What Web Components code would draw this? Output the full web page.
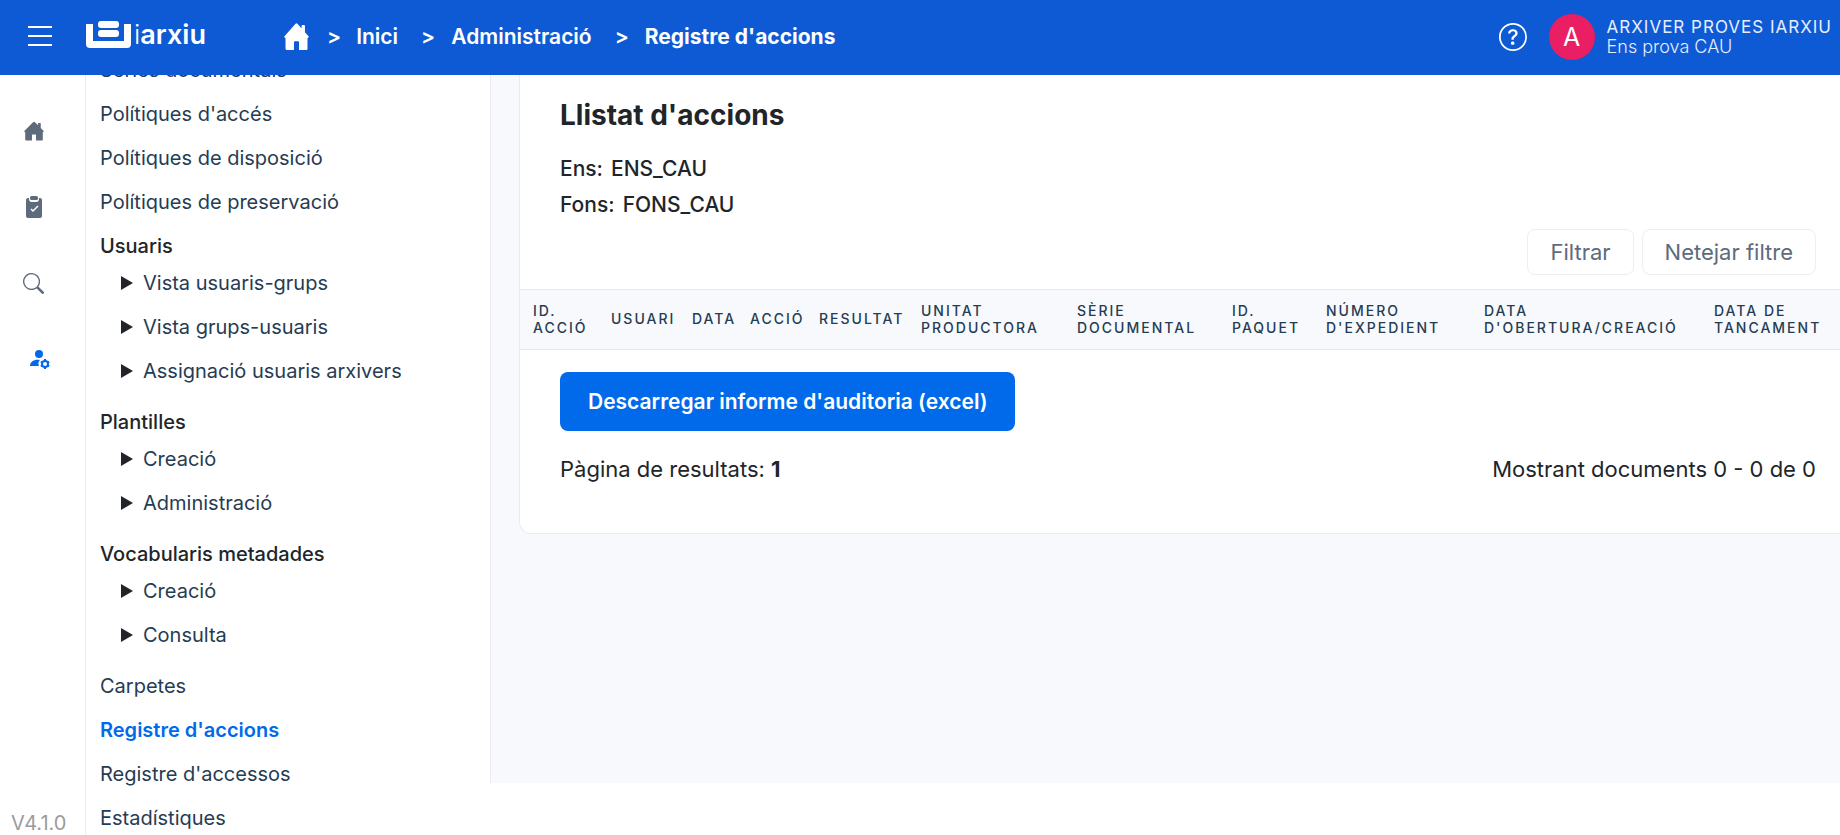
<!DOCTYPE html>
<html lang="ca">
<head>
<meta charset="utf-8">
<title>iArxiu - Registre d'accions</title>
<style>
  html, body { margin: 0; height: 100%; }
  body { font-family: Inter, "Open Sans", sans-serif; color: #212529; background: #fff; overflow: hidden; }
</style>
</head>
<body>
<ia-app>
  <ia-header slot="header"></ia-header>
  <ia-rail slot="rail"></ia-rail>
  <ia-sidebar slot="sidebar">
    <ia-link>Sèries documentals</ia-link>
    <ia-link>Polítiques d'accés</ia-link>
    <ia-link>Polítiques de disposició</ia-link>
    <ia-link>Polítiques de preservació</ia-link>
    <ia-group label="Usuaris">
      <ia-link nested>Vista usuaris-grups</ia-link>
      <ia-link nested>Vista grups-usuaris</ia-link>
      <ia-link nested>Assignació usuaris arxivers</ia-link>
    </ia-group>
    <ia-group label="Plantilles">
      <ia-link nested>Creació</ia-link>
      <ia-link nested>Administració</ia-link>
    </ia-group>
    <ia-group label="Vocabularis metadades">
      <ia-link nested>Creació</ia-link>
      <ia-link nested>Consulta</ia-link>
    </ia-group>
    <ia-link>Carpetes</ia-link>
    <ia-link active>Registre d'accions</ia-link>
    <ia-link>Registre d'accessos</ia-link>
    <ia-link>Estadístiques</ia-link>
  </ia-sidebar>
  <ia-actions></ia-actions>
</ia-app>

<script>
const HOUSE = '<path d="M8.707 1.5a1 1 0 0 0-1.414 0L.646 8.146 1.5 9v5.5A1 1 0 0 0 2 15h4.5v-4a.5.5 0 0 1 .5-.5h2a.5.5 0 0 1 .5.5v4H14a.5.5 0 0 0 .5-.5V9l.854-.854L13 5.793V2.500a.5.5 0 0 0-.5-.5h-1a.5.5 0 0 0-.5.5v1.293z"/>';

function define(name, html, setup) {
  const template = document.createElement('template');
  template.innerHTML = '<style>*, *::before { box-sizing: border-box; } svg { display: block; fill: currentColor; }</style>' + html;
  customElements.define(name, class extends HTMLElement {
    connectedCallback() {
      if (this.shadowRoot) return;
      this.attachShadow({ mode: 'open' }).append(template.content.cloneNode(true));
      if (setup) setup(this, this.shadowRoot);
    }
  });
}

define('ia-app', `
  <style>
    :host { display: grid; grid-template: 75px minmax(0, 1fr) / 86px 404px minmax(0, 1fr); height: 100vh; }
    slot { display: contents; }
    header { grid-column: 1 / -1; }
    nav, aside { min-height: 0; }
    aside { border-right: 1px solid #e9ebef; }
    main { min-width: 0; overflow: hidden; }
  </style>
  <header><slot name="header"></slot></header>
  <aside><slot name="rail"></slot></aside>
  <nav aria-label="Administració"><slot name="sidebar"></slot></nav>
  <main><slot></slot></main>
`);

define('ia-header', `
  <style>
    :host { display: flex; align-items: center; box-sizing: border-box; height: 75px; padding: 0 8px 2px 28px; background: #0e5ad4; color: #fff; }
    a { color: inherit; text-decoration: none; }
    button { padding: 0; border: 0; background: none; color: inherit; font: inherit; }
    .menu { margin-right: 34px; }
    .logo { display: flex; align-items: center; gap: 2px; width: 198px; padding-bottom: 4px; font: 600 27px/30px Inter, sans-serif; }
    .logo .i { font-weight: 300; }
    .crumbs { display: flex; align-items: center; flex: 1; font: 600 21px/30px Inter, sans-serif; }
    .crumbs ol { display: flex; align-items: center; margin: 0; padding: 0; list-style: none; }
    .crumbs li + li::before { content: ">"; margin: 0 16px 0 23px; }
    .crumbs li:nth-child(2)::before { margin: 0 15px 0 18px; }
    .crumbs .here { font-weight: 700; }
    .help { margin-right: 22px; }
    .avatar { display: grid; place-items: center; width: 46px; height: 46px; margin-right: 12px; border-radius: 50%; background: #e91e63; font-size: 25px; }
    .who { font-size: 18px; line-height: 20px; font-weight: 300; color: #e6eefc; }
    .who b { display: block; font-size: 17px; font-weight: 400; letter-spacing: 1px; }
  </style>
  <button class="menu" aria-label="Menú"><svg width="24" height="24" viewBox="0 0 24 24"><path d="M0 2h24M0 11h24M0 20h24" stroke="currentColor" stroke-width="2"/></svg></button>
  <a class="logo" href="#inici">
    <svg width="46" height="28" viewBox="0 0 46 28"><path d="M0 3h7v17h31V3h7v20a4 4 0 0 1-4 4H4a4 4 0 0 1-4-4z"/><rect x="12" y="0" width="21" height="7" rx="3"/><rect x="12" y="9" width="21" height="7" rx="3"/></svg>
    <span><span class="i">i</span>arxiu</span>
  </a>
  <nav class="crumbs" aria-label="Ruta">
    <ol>
      <li><a href="#home" aria-label="Portada"><svg width="25" height="27" viewBox="0.6 1 14.8 14" preserveAspectRatio="none">${HOUSE}</svg></a></li>
      <li><a href="#inici">Inici</a></li>
      <li><a href="#administracio">Administració</a></li>
      <li><a class="here" href="#registre" aria-current="page">Registre d'accions</a></li>
    </ol>
  </nav>
  <button class="help" aria-label="Ajuda"><svg width="28" height="28" viewBox="0 0 16 16"><path d="M8 15A7 7 0 1 1 8 1a7 7 0 0 1 0 14m0 1A8 8 0 1 0 8 0a8 8 0 0 0 0 16"/><path d="M5.255 5.786a.237.237 0 0 0 .241.247h.825c.138 0 .248-.113.266-.25.09-.656.54-1.134 1.342-1.134.686 0 1.314.343 1.314 1.168 0 .635-.374.927-.965 1.371-.673.489-1.206 1.060-1.168 1.987l.003.217a.25.25 0 0 0 .25.246h.811a.25.25 0 0 0 .25-.25v-.105c0-.718.273-.927 1.010-1.486.609-.463 1.244-.977 1.244-2.056 0-1.511-1.276-2.241-2.673-2.241-1.267 0-2.655.590-2.750 2.286m1.557 5.763c0 .533.425.927 1.010.927.609 0 1.028-.394 1.028-.927 0-.552-.420-.940-1.029-.940-.584 0-1.009.388-1.009.940"/></svg></button>
  <span class="avatar">A</span>
  <span class="who"><b>ARXIVER PROVES IARXIU</b>Ens prova CAU</span>
`);

define('ia-rail', `
  <style>
    :host { display: flex; flex-direction: column; justify-content: space-between; height: 100%; color: #5d6b7c; }
    ul { display: grid; grid-auto-rows: 76px; margin: 0; padding: 18px 18px 0 0; list-style: none; }
    a { display: grid; place-items: center; height: 76px; color: inherit; }
    .active { padding-left: 12px; color: #006aeb; }
    small { padding: 0 11px; font-size: 20px; line-height: 24px; color: #9b9b9b; }
  </style>
  <ul>
    <li><a href="#home" aria-label="Inici"><svg width="20" height="20" viewBox="0.6 1 14.8 14">${HOUSE}</svg></a></li>
    <li><a href="#tasques" aria-label="Tasques"><svg width="18" height="22" viewBox="0 0 18 22"><path d="M3 2h1v1q0 3 3 3h4q3 0 3-3V2h1q2 0 2 2v16q0 2-2 2H3q-2 0-2-2V4q0-2 2-2"/><rect x="5" y="0" width="8" height="4" rx="1.500"/><path d="M6 13l2 2 5-5" fill="none" stroke="#fff" stroke-width="1.500"/></svg></a></li>
    <li><a href="#cerca" aria-label="Cerca"><svg width="21" height="21" viewBox="0 0 16 16"><path d="M11.742 10.344a6.500 6.500 0 1 0-1.397 1.398h-.001q.044.060.098.115l3.850 3.850a1 1 0 0 0 1.415-1.414l-3.850-3.850a1 1 0 0 0-.115-.100zM12 6.500a5.500 5.500 0 1 1-11 0 5.500 5.500 0 0 1 11 0"/></svg></a></li>
    <li><a class="active" href="#administracio" aria-label="Administració"><svg width="20" height="19" viewBox="0 0 20 19"><circle cx="9" cy="4" r="4"/><path d="M0 16c0-4 4-7 10-6-2 2-2 4-1 6z"/><circle cx="15" cy="14" r="3" fill="none" stroke="currentColor" stroke-width="2"/><path d="M15 9v2M15 17v2M11 11.500l1 1M18 15.500l1 1M11 16.500l1-1M18 12.500l1-1" stroke="currentColor" stroke-width="2"/></svg></a></li>
  </ul>
  <small>V4.1.0</small>
`);

define('ia-sidebar', `
  <style>
    :host { display: block; height: 100%; overflow: auto; scrollbar-width: none; padding-bottom: 40px; box-sizing: border-box; }
  </style>
  <slot></slot>
`, host => { host.initialScroll = 27; });

define('ia-group', `
  <style>
    :host { display: block; padding-bottom: 7px; }
    h2 { margin: 0; padding: 8px 14px 0; font-size: 20px; line-height: 29px; font-weight: 500; }
  </style>
  <h2></h2><slot></slot>
`, (host, root) => { root.querySelector('h2').textContent = host.getAttribute('label'); });

define('ia-link', `
  <style>
    :host { display: flex; align-items: center; height: 44px; padding-left: 14px; font-size: 20px; box-sizing: border-box; }
    :host([nested]) { padding-left: 35px; }
    :host([nested])::before { content: ""; width: 12px; height: 14px; margin-right: 10px; background: #212529; clip-path: polygon(0 0, 100% 50%, 0 100%); }
    a { color: #263c53; text-decoration: none; }
    :host([active]) a { font-weight: 600; color: #006aeb; }
  </style>
  <a href="#seccio"><slot></slot></a>
`);

define('ia-actions', `
  <style>
    :host { display: block; height: calc(100% - 52px); box-sizing: border-box; padding-left: 28px; border-left: 1px solid #e9ebef; background: #f7f9fd; }
    section { padding-bottom: 48px; border: solid #e9ebef; border-width: 0 0 1px 1px; border-bottom-left-radius: 12px; background: #fff; }
    h1 { margin: 0; padding: 22px 40px 0; font-size: 28px; line-height: 36px; font-weight: 700; }
    dl { margin: 0; padding: 18px 40px 0; font-size: 21px; line-height: 36px; font-weight: 500; }
    dl div { display: flex; gap: 8px; }
    dt, dd { margin: 0; }
    button { font-family: inherit; }
    .tools { display: flex; justify-content: flex-end; gap: 8px; padding: 6px 24px 14px; }
    .tools button { height: 46px; padding: 0 22px; border: 1px solid #eceef1; border-radius: 8px; background: #fff; color: #5d6b7c; font-size: 22px; }
    table { width: 100%; border-collapse: collapse; table-layout: fixed; }
    th { height: 60px; padding: 0 0 2px 13px; border: solid #e4e8ee; border-width: 1px 0; background: #f7f9fd; color: #263c53; text-align: left; font-size: 14px; line-height: 17px; font-weight: 500; letter-spacing: 2px; white-space: nowrap; }
    .download { display: block; height: 59px; margin: 22px 40px; padding: 0 28px; border: 0; border-radius: 8px; background: #006aeb; color: #fff; font-size: 21px; font-weight: 600; }
    .foot { display: flex; justify-content: space-between; padding: 0 24px 0 40px; font-size: 22px; line-height: 32px; }
    .foot b { font-weight: 700; }
  </style>
  <section>
    <h1>Llistat d'accions</h1>
    <dl><div><dt>Ens:</dt><dd>ENS_CAU</dd></div><div><dt>Fons:</dt><dd>FONS_CAU</dd></div></dl>
    <div class="tools"><button>Filtrar</button><button>Netejar filtre</button></div>
    <table>
      <colgroup><col style="width:78px"><col style="width:81px"><col style="width:58px"><col style="width:69px"><col style="width:102px"><col style="width:156px"><col style="width:155px"><col style="width:94px"><col style="width:158px"><col style="width:230px"><col></colgroup>
      <thead><tr>
        <th>ID.<br>ACCIÓ</th><th>USUARI</th><th>DATA</th><th>ACCIÓ</th><th>RESULTAT</th><th>UNITAT<br>PRODUCTORA</th><th>SÈRIE<br>DOCUMENTAL</th><th>ID.<br>PAQUET</th><th>NÚMERO<br>D'EXPEDIENT</th><th>DATA<br>D'OBERTURA/CREACIÓ</th><th>DATA DE<br>TANCAMENT</th>
      </tr></thead>
    </table>
    <button class="download">Descarregar informe d'auditoria (excel)</button>
    <div class="foot"><span>Pàgina de resultats: <b>1</b></span><span>Mostrant documents 0 - 0 de 0</span></div>
  </section>
`);

const sidebar = document.querySelector('ia-sidebar');
sidebar.scrollTop = sidebar.initialScroll;
</script>
</body>
</html>
